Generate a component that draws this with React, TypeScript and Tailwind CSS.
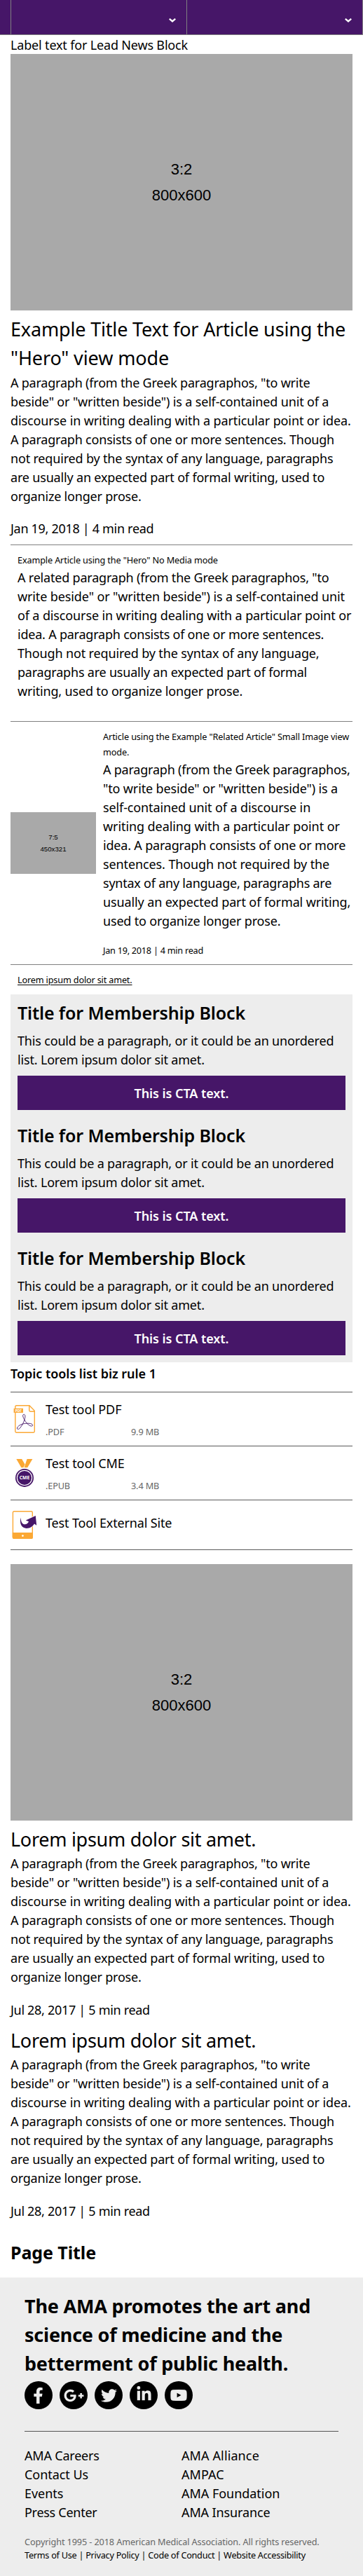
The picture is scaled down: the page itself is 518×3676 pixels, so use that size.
import type { ReactNode } from "react";
import { FaFacebookF, FaGooglePlusG, FaLinkedinIn, FaTwitter } from "react-icons/fa";

function Line({ children, className = "" }: { children: ReactNode; className?: string }) {
  return <span className={`block whitespace-nowrap ${className}`}>{children}</span>;
}

function NavChevron() {
  return (
    <svg viewBox="0 0 10 6" className="mt-[26px] mr-[15px] h-[6px] w-[10px]" fill="none" stroke="#fff" strokeWidth="2.3">
      <path d="M0.8 0.9 L5 4.4 L9.2 0.9" />
    </svg>
  );
}

function NavBar() {
  return (
    <nav className="flex h-[50px] border-b border-[#808080] bg-[#461668] pl-[15px]">
      <div className="flex w-[251px] justify-end border-l border-[#808080]">
        <NavChevron />
      </div>
      <div className="flex w-[252px] justify-end border-x border-[#808080]">
        <NavChevron />
      </div>
    </nav>
  );
}

function Placeholder() {
  return (
    <div className="flex h-[366px] flex-col items-center justify-center bg-[#a9a9a9] font-['Liberation_Sans',sans-serif] text-[22px] leading-[37px]">
      <span>3:2</span>
      <span>800x600</span>
    </div>
  );
}

function Paragraph() {
  return (
    <p className="text-[18px] leading-[27px] tracking-[-0.18px]">
      <Line className="tracking-[-0.21px]">A paragraph (from the Greek paragraphos, "to write</Line>
      <Line className="tracking-[-0.15px]">beside" or "written beside") is a self-contained unit of a</Line>
      <Line className="tracking-[-0.12px]">discourse in writing dealing with a particular point or idea.</Line>
      <Line className="tracking-[-0.21px]">A paragraph consists of one or more sentences. Though</Line>
      <Line>not required by the syntax of any language, paragraphs</Line>
      <Line>are usually an expected part of formal writing, used to</Line>
      <Line className="tracking-[-0.2px]">organize longer prose.</Line>
    </p>
  );
}

function DateLine({ children }: { children: ReactNode }) {
  return <p className="text-[18px] leading-[27px] tracking-[-0.31px]">{children}</p>;
}

function RelatedText() {
  return (
    <article className="h-[251px] px-[10px] pt-[10px]">
      <h3 className="text-[12.7px] leading-[22px] tracking-[-0.14px]">Example Article using the "Hero" No Media mode</h3>
      <p className="mt-px text-[18px] leading-[27px] tracking-[-0.17px]">
        <Line className="tracking-[-0.2px]">A related paragraph (from the Greek paragraphos, "to</Line>
        <Line className="tracking-[-0.12px]">write beside" or "written beside") is a self-contained unit</Line>
        <Line className="tracking-[-0.13px]">of a discourse in writing dealing with a particular point or</Line>
        <Line className="tracking-[-0.22px]">idea. A paragraph consists of one or more sentences.</Line>
        <Line className="tracking-[-0.15px]">Though not required by the syntax of any language,</Line>
        <Line className="tracking-[-0.21px]">paragraphs are usually an expected part of formal</Line>
        <Line>writing, used to organize longer prose.</Line>
      </p>
    </article>
  );
}

function RelatedImage() {
  return (
    <article className="flex h-[347px] items-center gap-[10px] border-t border-[#808080]">
      <div className="flex h-[88px] w-[122px] shrink-0 flex-col items-center justify-center bg-[#a9a9a9] font-['Liberation_Sans',sans-serif] text-[9.7px] leading-[17px]">
        <span>7:5</span>
        <span>450x321</span>
      </div>
      <div className="h-[326px] text-[12.7px] leading-[22px]">
        <h3>
          <Line className="tracking-[-0.11px]">Article using the Example "Related Article" Small Image view</Line>
          <Line className="tracking-[-0.14px]">mode.</Line>
        </h3>
        <p className="mt-px text-[18px] leading-[27px]">
          <Line className="tracking-[-0.21px]">A paragraph (from the Greek paragraphos,</Line>
          <Line className="tracking-[-0.14px]">"to write beside" or "written beside") is a</Line>
          <Line className="tracking-[-0.12px]">self-contained unit of a discourse in</Line>
          <Line className="tracking-[-0.08px]">writing dealing with a particular point or</Line>
          <Line className="tracking-[-0.19px]">idea. A paragraph consists of one or more</Line>
          <Line className="tracking-[-0.11px]">sentences. Though not required by the</Line>
          <Line className="tracking-[-0.23px]">syntax of any language, paragraphs are</Line>
          <Line className="tracking-[-0.12px]">usually an expected part of formal writing,</Line>
          <Line className="tracking-[-0.18px]">used to organize longer prose.</Line>
        </p>
        <p className="mt-[17px] tracking-[-0.26px]">Jan 19, 2018 | 4 min read</p>
      </div>
    </article>
  );
}

function MembershipBlock() {
  return (
    <section className="px-[10px] pt-[9px] pb-[10px]">
      <h2 className="text-[25px] leading-[34px] font-semibold tracking-[-0.13px]">Title for Membership Block</h2>
      <p className="mt-[10px] text-[18px] leading-[27px] tracking-[-0.17px]">
        <Line>This could be a paragraph, or it could be an unordered</Line>
        <Line>list. Lorem ipsum dolor sit amet.</Line>
      </p>
      <a className="mt-[9px] block h-[49px] bg-[#461668] pt-[12px] text-center text-[18px] leading-[27px] font-semibold tracking-[-0.06px] text-white">
        This is CTA text.
      </a>
    </section>
  );
}

function PdfIcon() {
  return (
    <svg viewBox="0 0 40 40" className="size-10" fill="none">
      <path d="M8.4 0.8 H27 L34.3 8.3 V37.6 Q34.3 39.3 32.6 39.3 H8.4 Q6.8 39.3 6.8 37.6 V2.4 Q6.8 0.8 8.4 0.8 Z" stroke="#fba834" strokeWidth="1.4" />
      <path d="M26.7 1 V7.6 Q26.7 9.2 28.3 9.2 H34.3" stroke="#fba834" strokeWidth="1.4" />
      <rect x="4.6" y="4.8" width="13.4" height="6.2" fill="#fba834" />
      <text x="11.3" y="9.6" textAnchor="middle" fontSize="4.8" fontWeight="700" fill="#fff" fontFamily="Noto Sans, sans-serif">PDF</text>
      <path
        d="M19.4 26.6 C22.5 26.2 25.5 26 28.3 26.5 C30.8 27 32 28 31.6 29.2 C31.2 30.8 27.8 30.2 25.4 28 C22.6 25.6 19.8 21.5 18.4 18.2 C17 15 17.7 13.4 19.2 13.4 C21 13.4 21.3 16 20.4 19.5 C19.2 24.4 16 30.4 12.8 33.6 C11.2 35 9.2 34.8 9.5 33 C10 30.2 14.5 27.4 19.4 26.6 Z"
        stroke="#461668"
        strokeWidth="0.9"
      />
    </svg>
  );
}

function CmeIcon() {
  return (
    <svg viewBox="0 0 40 40" className="size-10" fill="none">
      <path d="M8.3 0 H16.1 L20.6 7.8 L18.4 12.3 H15.4 Z" fill="#fba834" />
      <path d="M23.6 0 H31.4 L24.2 12.3 H19.5 Z" fill="#fba834" />
      <circle cx="20" cy="26.9" r="13" fill="#461668" />
      <circle cx="20" cy="26.9" r="10.6" stroke="#fff" strokeWidth="1.2" />
      <text x="20" y="29.3" textAnchor="middle" fontSize="6.8" fontWeight="700" fill="#fff" fontFamily="Noto Sans, sans-serif">CME</text>
    </svg>
  );
}

function ExternalIcon() {
  return (
    <svg viewBox="0 0 40 40" className="size-10" fill="none">
      <rect x="3.4" y="0.8" width="27.9" height="38.4" rx="1.6" stroke="#fba834" strokeWidth="1.4" />
      <path d="M2.7 31 H32 V38 Q32 40 30 40 H4.7 Q2.7 40 2.7 38 Z" fill="#fba834" />
      <circle cx="17.4" cy="35.6" r="1.4" fill="#fff" />
      <path
        d="M14.6 9.6 C12.3 19 16.5 24.9 22.8 24.9 C28 24.9 31.8 22 34 18.4 L37.2 20.7 L35.8 7 L21.8 13.6 L26 15.2 C24.6 18.4 21.6 20.2 18.6 19 C15.4 17.6 14.8 13.6 14.6 9.6 Z"
        fill="#461668"
        stroke="#fff"
        strokeWidth="1.6"
        paintOrder="stroke"
      />
    </svg>
  );
}

function ToolRow({ icon, title, type, size }: { icon: ReactNode; title: string; type: string; size: string }) {
  return (
    <li className="flex h-[77px] items-center gap-[10px] border-t border-[#5a5a5a]">
      {icon}
      <div className="h-[76px] pt-[11px]">
        <h3 className="text-[18px] leading-[27px] tracking-[-0.1px]">{title}</h3>
        <div className="mt-[7px] flex text-[12.7px] leading-[22px] tracking-[-0.14px] text-[#666]">
          <span className="w-[122px]">{type}</span>
          <span>{size}</span>
        </div>
      </div>
    </li>
  );
}

function ToolsList() {
  return (
    <section className="pt-[3px]">
      <h2 className="text-[18px] leading-[27px] font-semibold tracking-[-0.04px]">Topic tools list biz rule 1</h2>
      <ul className="mt-[12px]">
        <ToolRow icon={<PdfIcon />} title="Test tool PDF" type=".PDF" size="9.9 MB" />
        <ToolRow icon={<CmeIcon />} title="Test tool CME" type=".EPUB" size="3.4 MB" />
        <li className="flex h-[72px] items-center gap-[10px] border-y border-[#5a5a5a]">
          <ExternalIcon />
          <h3 className="pb-[6px] text-[18px] leading-[27px] tracking-[-0.16px]">Test Tool External Site</h3>
        </li>
      </ul>
    </section>
  );
}

function Teaser() {
  return (
    <article>
      <h2 className="text-[27px] leading-[41px] tracking-[-0.28px]">Lorem ipsum dolor sit amet.</h2>
      <div className="mt-px mb-[20px]">
        <Paragraph />
      </div>
      <DateLine>Jul 28, 2017 | 5 min read</DateLine>
    </article>
  );
}

function Social({ children }: { children: ReactNode }) {
  return <a className="flex size-10 items-center justify-center rounded-full bg-black text-[#ededed]">{children}</a>;
}

function Footer() {
  return (
    <footer className="h-[426px] bg-[#ededed] px-[35px] pt-[20px]">
      <h2 className="text-[27px] leading-[41px] font-bold">
        <Line className="tracking-[-0.19px]">The AMA promotes the art and</Line>
        <Line className="tracking-[-0.22px]">science of medicine and the</Line>
        <Line className="tracking-[-0.19px]">betterment of public health.</Line>
      </h2>
      <div className="mt-[5px] flex gap-[10px]">
        <Social><FaFacebookF className="ml-[-2px] size-[23px]" /></Social>
        <Social><FaGooglePlusG className="size-[29px]" /></Social>
        <Social><FaTwitter className="size-[23px]" /></Social>
        <Social><FaLinkedinIn className="mt-[-3px] size-[23px]" /></Social>
        <Social>
          <svg viewBox="0 0 24 16" className="h-4 w-6" fill="currentColor">
            <path fillRule="evenodd" d="M3.5 0.3 Q12 -0.3 20.5 0.3 Q23 0.4 23.4 3 Q23.9 8 23.4 13 Q23 15.6 20.5 15.7 Q12 16.3 3.5 15.7 Q1 15.6 0.6 13 Q0.1 8 0.6 3 Q1 0.4 3.5 0.3 Z M9.6 4.8 V11.2 L15.4 8 Z" />
          </svg>
        </Social>
      </div>
      <div className="mt-[31px] grid grid-cols-2 border-t border-[#555] pt-[21px] text-[18px] leading-[27px]">
        <ul>
          <li className="tracking-[-0.2px]">AMA Careers</li>
          <li className="tracking-[-0.05px]">Contact Us</li>
          <li className="tracking-[-0.05px]">Events</li>
          <li className="tracking-[-0.28px]">Press Center</li>
        </ul>
        <ul>
          <li className="tracking-[0.12px]">AMA Alliance</li>
          <li className="tracking-[0.05px]">AMPAC</li>
          <li className="tracking-[-0.03px]">AMA Foundation</li>
          <li className="tracking-[-0.12px]">AMA Insurance</li>
        </ul>
      </div>
      <div className="mt-[19px] text-[12.7px] leading-[19px]">
        <Line className="tracking-[-0.12px] text-[#666]">Copyright 1995 - 2018 American Medical Association. All rights reserved.</Line>
        <Line className="tracking-[-0.27px]">Terms of Use | Privacy Policy | Code of Conduct | Website Accessibility</Line>
      </div>
    </footer>
  );
}

export default function App() {
  return (
    <div className="w-[518px] bg-white font-['Noto_Sans',sans-serif] text-black">
      <NavBar />
      <main className="px-[15px] pt-px">
        <p className="text-[18px] leading-[26px] tracking-[-0.17px]">Label text for Lead News Block</p>
        <Placeholder />
        <article className="border-b border-[#808080] pt-[6px] pb-[9px]">
          <h1 className="mb-[2px] text-[27px] leading-[41px]">
            <Line className="tracking-[-0.17px]">Example Title Text for Article using the</Line>
            <Line className="tracking-[-0.12px]">"Hero" view mode</Line>
          </h1>
          <div className="mb-[19px]">
            <Paragraph />
          </div>
          <DateLine>Jan 19, 2018 | 4 min read</DateLine>
        </article>
        <RelatedText />
        <RelatedImage />
        <div className="border-t border-[#808080] px-[10px] py-[10px] text-[12.7px] leading-[22px] tracking-[-0.17px]">
          <a className="underline underline-offset-2">Lorem ipsum dolor sit amet.</a>
        </div>
        <div className="bg-[#ededed]">
          <MembershipBlock />
          <MembershipBlock />
          <MembershipBlock />
        </div>
        <ToolsList />
        <div className="mt-[20px] mb-[6px]">
          <Placeholder />
        </div>
        <div className="flex flex-col gap-[9px]">
          <Teaser />
          <Teaser />
        </div>
        <h2 className="mt-[28px] mb-[19px] text-[25px] leading-[34px] font-bold tracking-[-0.08px]">Page Title</h2>
      </main>
      <Footer />
    </div>
  );
}
